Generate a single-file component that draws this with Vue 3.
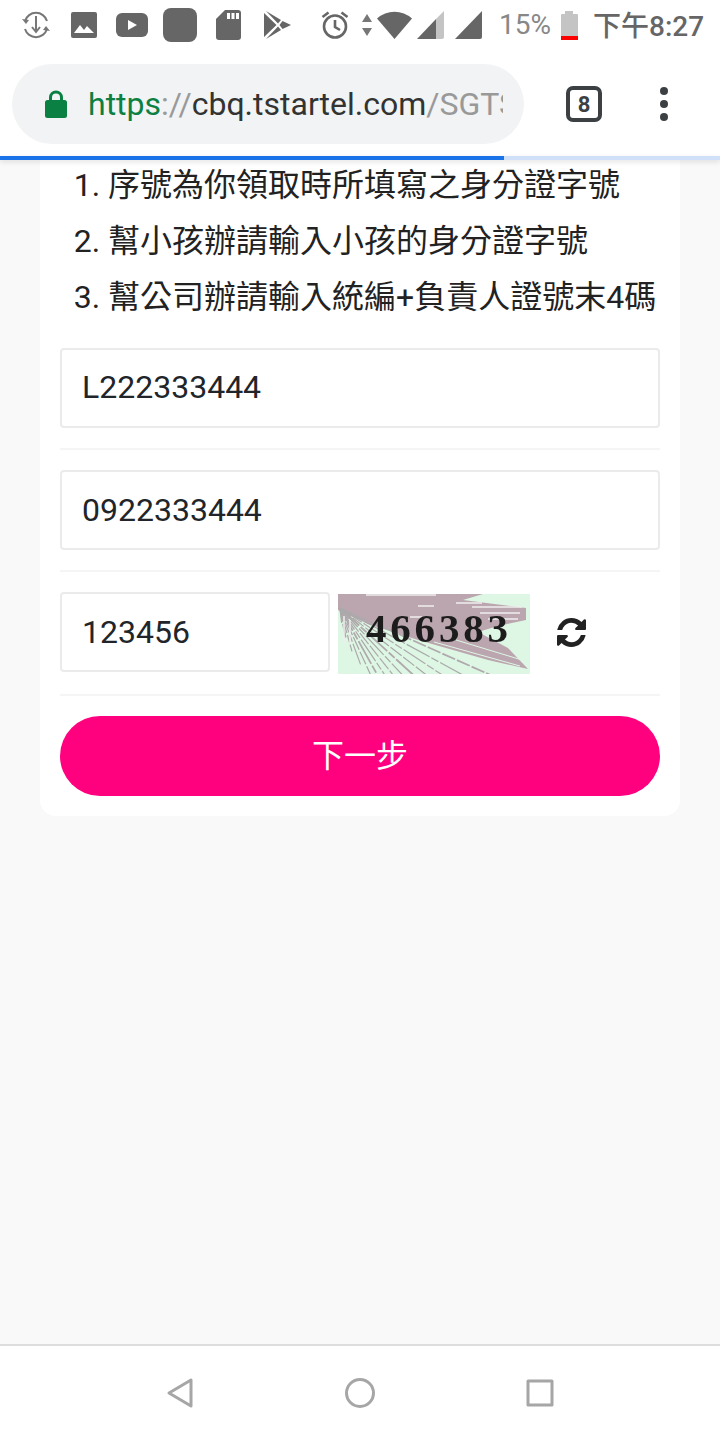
<template>
  <div class="phone">
    <div class="status-bar">
      <svg class="ic" style="margin-left:21px" width="30" height="30" viewBox="0 0 30 30" fill="none" stroke="#777" stroke-width="2">
        <path d="M4 11a11.500 11.500 0 0 1 22 0M26 19a11.500 11.500 0 0 1-22 0" />
        <path d="M1 9l4 5 3-4zM29 21l-4-5-3 4z" fill="#777" stroke="none" />
        <path d="M15 6v15M11 17l4 5 4-5" />
      </svg>
      <svg class="ic" style="margin-left:20px" width="26" height="26" viewBox="0 0 26 26">
        <path fill="#666" d="M2 0h22a2 2 0 0 1 2 2v22a2 2 0 0 1-2 2H2a2 2 0 0 1-2-2V2a2 2 0 0 1 2-2z" />
        <path fill="#fff" d="M3 21l6-8 4 5 3-4 7 7z" />
      </svg>
      <svg class="ic" style="margin-left:19px" width="32" height="24" viewBox="0 0 32 24">
        <rect width="32" height="24" rx="6" fill="#666" />
        <path fill="#fff" d="M12 7l9 5-9 5z" />
      </svg>
      <span class="blank-square"></span>
      <svg class="ic" style="margin-left:19px" width="25" height="30" viewBox="0 0 25 30">
        <path fill="#666" d="M9 0h13a3 3 0 0 1 3 3v24a3 3 0 0 1-3 3H3a3 3 0 0 1-3-3V9z" />
        <path fill="#fff" d="M11 3h3v6h-3zM15.500 3h3v6h-3zM20 3h3v6h-3z" />
      </svg>
      <svg class="ic" style="margin-left:23px" width="27" height="28" viewBox="0 0 27 28">
        <path fill="#666" d="M0 2l12.500 12L0 26zM2 0l15 9-3 3.500zM2 28l12-12.500 3 3.500zM18.500 10l8.500 4-8.500 4-3-4z" />
      </svg>
      <svg class="ic" style="margin-left:30px" width="28" height="28" viewBox="0 0 28 28" fill="none" stroke="#666" stroke-width="2.600">
        <circle cx="14" cy="15.500" r="11" />
        <path d="M14 9v7l5 3M1.500 6l6-4.500M26.500 6l-6-4.500" />
      </svg>
      <svg class="ic" style="margin-left:13px" width="10" height="26" viewBox="0 0 10 26">
        <path fill="#777" d="M5 2l5 8H0zM5 24L0 16h10z" />
      </svg>
      <svg class="ic" style="margin-left:5px" width="35" height="28" viewBox="0 0 35 28">
        <path fill="#666" d="M0 7.500a26 26 0 0 1 35 0L17.500 28z" />
      </svg>
      <svg class="ic" style="margin-left:5px" width="27" height="28" viewBox="0 0 27 28">
        <path fill="#c4c4c4" d="M27 0v26a2 2 0 0 1-2 2h-6V8z" />
        <path fill="#666" d="M19 8v20H0z" />
      </svg>
      <svg class="ic" style="margin-left:11px" width="27" height="28" viewBox="0 0 27 28">
        <path fill="#666" d="M27 0v26a2 2 0 0 1-2 2H0z" />
      </svg>
      <span class="battery-pct">15%</span>
      <span class="battery">
        <span class="battery-cap"></span>
        <span class="battery-body"><span class="battery-level"></span></span>
      </span>
      <span class="clock">下午8:27</span>
    </div>

    <div class="toolbar">
      <div class="omnibox">
        <svg class="lock" width="22" height="28" viewBox="0 0 22 28">
          <path fill="none" stroke="#0b8043" stroke-width="3" d="M5.500 12V7.500a5.500 5.500 0 0 1 11 0V12" />
          <rect y="10" width="22" height="18" rx="2.500" fill="#0b8043" />
        </svg>
        <div class="url">
          <span class="scheme">https</span><span class="muted">://</span><span class="host">cbq.tstartel.com</span><span class="path">/SGTS</span>
        </div>
      </div>
      <span class="tabs">8</span>
      <span class="menu"><i></i><i></i><i></i></span>
    </div>
    <div class="progress"><div class="progress-value"></div></div>

    <main class="content">
      <section class="card">
        <ol class="notes">
          <li>序號為你領取時所填寫之身分證字號</li>
          <li>幫小孩辦請輸入小孩的身分證字號</li>
          <li>幫公司辦請輸入統編+負責人證號末4碼</li>
        </ol>
        <div class="field"><div class="input first">L222333444</div></div>
        <div class="field"><div class="input">0922333444</div></div>
        <div class="field captcha-row">
          <div class="input code">123456</div>
          <svg class="captcha" width="192" height="80" viewBox="0 0 192 80">
            <rect width="192" height="80" fill="#def7e4" />
            <path fill="#bba6b0" d="M0 0H145L125 6 188 14V26L160 32 140 38 170 54 190 75 150 66 80 46 30 30 0 16z" />
            <line
              v-for="(l, i) in fanLines"
              :key="i"
              x1="2"
              y1="14"
              :x2="l.x"
              :y2="l.y"
              :stroke="l.color"
              :stroke-width="l.width"
              :stroke-dasharray="l.dash"
            />
            <path stroke="#f1eeee" stroke-width="1.500" fill="none" d="M28 1h70M80 12h16M118 9h26M134 13h50M142 19h40M72 23h12M150 25h30M6 22v28M12 26v24" />
            <path stroke="#def7e4" stroke-width="1" fill="none" d="M96 48l86 24M118 46l66 20" />
            <text class="captcha-digits" x="28" y="48">466383</text>
          </svg>
          <svg class="refresh" width="29" height="29" viewBox="0 0 1536 1536">
            <path fill="#222" d="M1511 928q0 5-1 7-64 268-268 434.500t-478 166.500q-146 0-282.500-55t-243.500-157l-129 129q-19 19-45 19t-45-19-19-45v-448q0-26 19-45t45-19h448q26 0 45 19t19 45-19 45l-137 137q71 66 161 102t187 36q134 0 250-65t186-179q11-17 53-117 8-23 30-23h192q13 0 22.500 9.500t9.500 22.500zm25-800v448q0 26-19 45t-45 19h-448q-26 0-45-19t-19-45 19-45l138-138q-148-137-349-137-134 0-250 65t-186 179q-11 17-53 117-8 23-30 23h-199q-13 0-22.500-9.500t-9.500-22.500v-7q65-268 270-434.500t480-166.500q146 0 284 55.500t245 156.500l130-129q19-19 45-19t45 19 19 45z" />
          </svg>
        </div>
        <button class="next" type="button"><span>下一步</span></button>
      </section>
    </main>

    <nav class="nav-bar">
      <svg width="28" height="32" viewBox="0 0 28 32" fill="none" stroke="#a6a6a6" stroke-width="3" stroke-linejoin="round">
        <path d="M25 3v26L3 16z" />
      </svg>
      <svg width="32" height="32" viewBox="0 0 32 32" fill="none" stroke="#a6a6a6" stroke-width="3">
        <circle cx="16" cy="16" r="13.500" />
      </svg>
      <svg width="28" height="28" viewBox="0 0 28 28" fill="none" stroke="#a6a6a6" stroke-width="3" stroke-linejoin="round">
        <rect x="2" y="2" width="24" height="24" />
      </svg>
    </nav>
  </div>
</template>

<script setup>
// radial streaks of the captcha picture, sparse and broken towards the bottom
const fanLines = []
for (let i = 0; i < 14; i++) {
  const deg = 24 + i * 4.600
  const angle = deg * Math.PI / 180
  const len = Math.min(70 / Math.sin(angle), 170 - i * 12 + (i * 37) % 20)
  fanLines.push({
    x: 2 + Math.cos(angle) * len,
    y: 14 + Math.sin(angle) * len,
    color: i % 2 ? '#a9a9a9' : '#b0a9ad',
    width: i % 4 === 0 ? 1.800 : 1.200,
    dash: i % 3 === 0 ? '14 2' : '26 2 8 2'
  })
}
</script>

<style>
body {
  background: #fff;
}
</style>

<style scoped>
.phone {
  width: 720px;
  height: 1440px;
  display: flex;
  flex-direction: column;
  overflow: hidden;
  background: #fff;
  font-family: Roboto, "Noto Sans CJK TC", sans-serif;
}

.status-bar {
  height: 50px;
  display: flex;
  align-items: center;
  flex-shrink: 0;
}

.ic {
  flex-shrink: 0;
}

.blank-square {
  width: 34px;
  height: 34px;
  margin-left: 15px;
  border-radius: 8px;
  background: #666;
}

.battery-pct {
  margin-left: 17px;
  margin-bottom: 2px;
  font-size: 28px;
  color: #888;
}

.battery {
  width: 17px;
  margin-left: 10px;
  display: flex;
  flex-direction: column;
  align-items: center;
}

.battery-cap {
  width: 8px;
  height: 3px;
  background: #c4c4c4;
}

.battery-body {
  width: 17px;
  height: 26px;
  display: flex;
  align-items: flex-end;
  border-radius: 1px;
  background: #c4c4c4;
}

.battery-level {
  width: 100%;
  height: 4px;
  background: #f00;
}

.clock {
  margin-left: 15px;
  margin-bottom: 2px;
  font-size: 28px;
  font-weight: 500;
  color: #666;
  white-space: nowrap;
}

.toolbar {
  height: 106px;
  display: flex;
  align-items: center;
  flex-shrink: 0;
  padding-left: 12px;
  padding-top: 2px;
  box-sizing: border-box;
}

.omnibox {
  width: 512px;
  height: 80px;
  display: flex;
  align-items: center;
  border-radius: 40px;
  background: #f1f3f4;
}

.lock {
  margin-left: 33px;
  flex-shrink: 0;
}

.url {
  width: 415px;
  margin-left: 21px;
  overflow: hidden;
  white-space: nowrap;
  font-size: 32px;
}

.scheme {
  color: #0b8043;
}

.muted,
.path {
  color: #999;
}

.host {
  color: #333;
}

.tabs {
  width: 36px;
  height: 36px;
  margin-left: 42px;
  box-sizing: border-box;
  display: flex;
  align-items: center;
  justify-content: center;
  border: 4px solid #3c4043;
  border-radius: 7px;
  font-size: 22px;
  font-weight: 700;
  color: #3c4043;
}

.menu {
  margin-left: 58px;
  display: flex;
  flex-direction: column;
  gap: 5px;
}

.menu i {
  width: 8px;
  height: 8px;
  border-radius: 50%;
  background: #3c4043;
}

.progress {
  height: 4px;
  flex-shrink: 0;
  background: #d0e0f8;
  box-shadow: 0 2px 5px rgba(0, 0, 0, 0.12);
  position: relative;
  z-index: 1;
}

.progress-value {
  width: 504px;
  height: 100%;
  background: #1a73e8;
}

.content {
  flex: 1;
  min-height: 0;
  padding: 0 40px;
  background: #f9f9f9;
}

.card {
  padding: 0 20px 20px;
  border-radius: 0 0 16px 16px;
  background: #fff;
}

.notes {
  margin: -3px 0 23px;
  padding: 0 0 0 48px;
  font-size: 32px;
  line-height: 56px;
  color: #222;
  white-space: nowrap;
}

.field {
  padding-bottom: 20px;
  margin-bottom: 20px;
  border-bottom: 2px solid #f5f5f5;
}

.input {
  height: 80px;
  box-sizing: border-box;
  display: flex;
  align-items: center;
  padding: 0 20px;
  border: 2px solid #ebebeb;
  border-radius: 4px;
  font-size: 32px;
  color: #212529;
}

.input.first {
  padding-bottom: 2px;
}

.captcha-row {
  display: flex;
  align-items: flex-start;
}

.code {
  width: 270px;
  flex-shrink: 0;
}

.captcha {
  margin: 2px 0 0 8px;
  flex-shrink: 0;
  filter: blur(0.5px);
}

.captcha-digits {
  font-family: "Liberation Serif", serif;
  font-size: 41px;
  font-weight: 700;
  letter-spacing: 3.800px;
  fill: #1c1c1c;
}

.refresh {
  margin-left: 27px;
  align-self: center;
  margin-bottom: 2px;
}

.next {
  display: block;
  width: 100%;
  height: 80px;
  padding: 0 0 6px;
  border: 0;
  border-radius: 40px;
  background: #ff007f;
  font-family: inherit;
  font-size: 32px;
  color: #fff;
}

.nav-bar {
  height: 96px;
  flex-shrink: 0;
  box-sizing: border-box;
  display: flex;
  align-items: center;
  justify-content: space-between;
  padding: 0 166px;
  border-top: 2px solid #ddd;
}
</style>
